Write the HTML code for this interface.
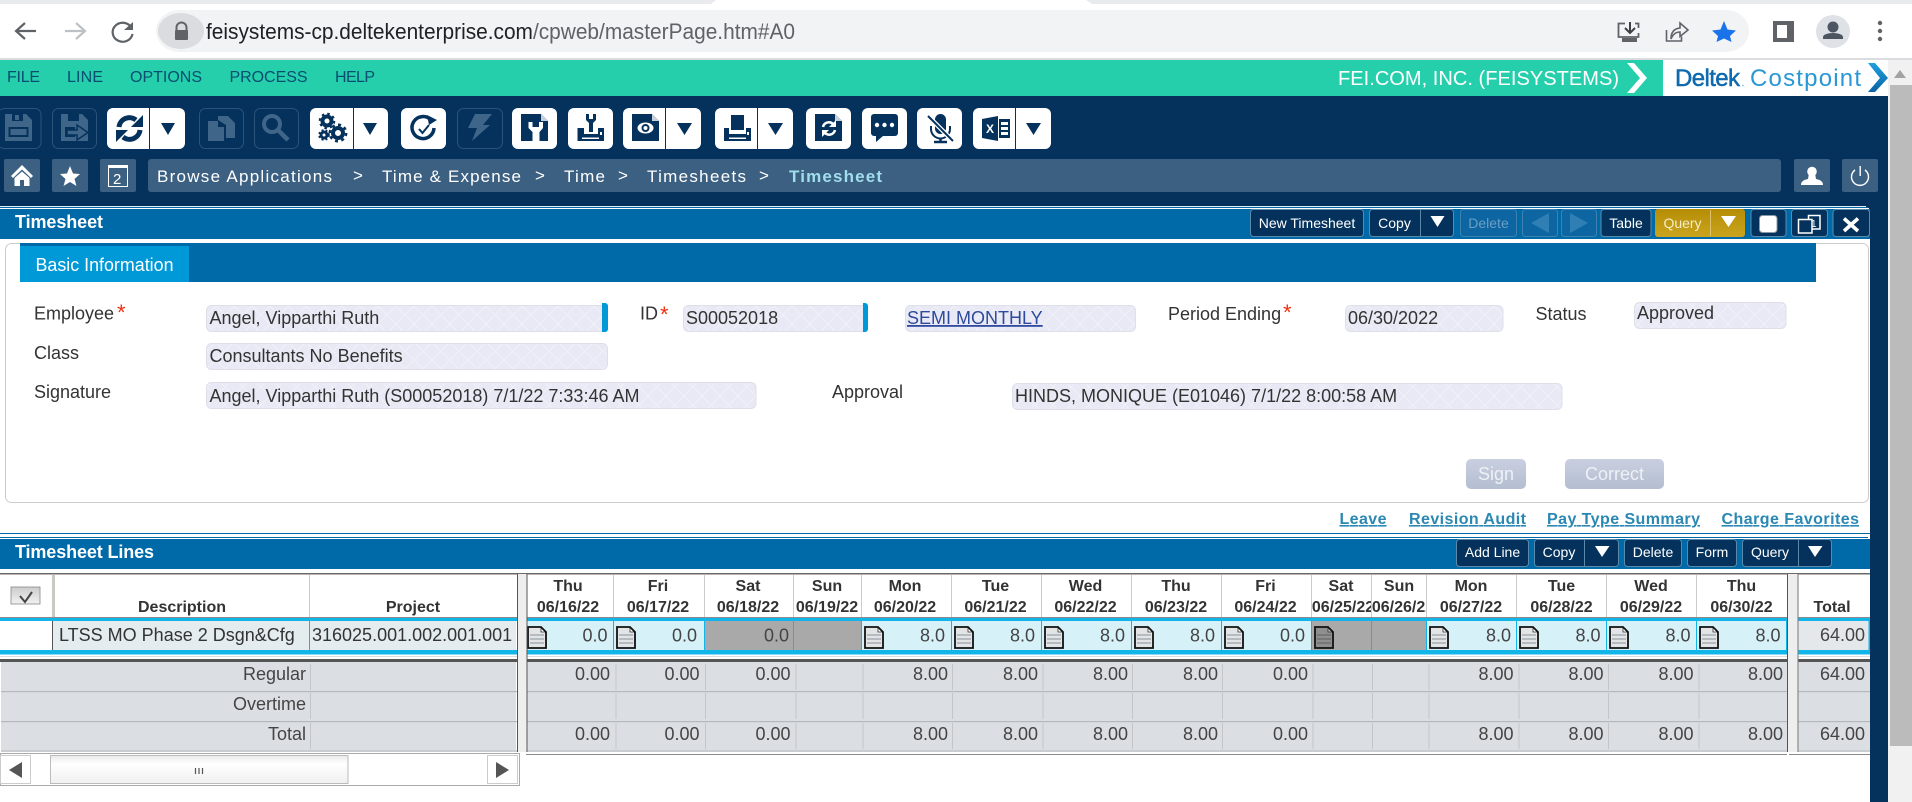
<!DOCTYPE html>
<html><head><meta charset="utf-8"><title>Timesheet</title>
<style>
html,body{margin:0;padding:0;width:1912px;height:802px;overflow:hidden;background:#fff}
svg{display:block;font-family:"Liberation Sans",Arial,sans-serif}
.l{font-size:18px;fill:#333}
.h{font-size:16px;font-weight:bold;fill:#333;text-anchor:middle}
.n{font-size:18px;fill:#444;text-anchor:end}
.b{font-size:14px;fill:#fff;text-anchor:middle}
.m{font-size:16px;fill:#0a4d70}
.c{font-size:17px;fill:#fff}
.k{font-size:16px;font-weight:bold;fill:#2a88b3;text-decoration:underline}
</style></head><body>
<svg width="1912" height="802" viewBox="0 0 1912 802" xmlns="http://www.w3.org/2000/svg">
<defs>
<pattern id="hatch" width="18" height="18" patternUnits="userSpaceOnUse"><rect width="18" height="18" fill="#e9e9f5"/><path d="M0 0L18 18M18 0L0 18" stroke="#f1f1f9" stroke-width="1"/></pattern>
<linearGradient id="gold" x1="0" y1="0" x2="0" y2="1"><stop offset="0" stop-color="#b58d05"/><stop offset="1" stop-color="#cba41f"/></linearGradient>
<linearGradient id="dis" x1="0" y1="0" x2="0" y2="1"><stop offset="0" stop-color="#c9cfe0"/><stop offset="1" stop-color="#b3bed0"/></linearGradient>
<linearGradient id="thumb" x1="0" y1="0" x2="0" y2="1"><stop offset="0" stop-color="#e9e9e9"/><stop offset=".3" stop-color="#fff"/><stop offset="1" stop-color="#f0f0f0"/></linearGradient>
<linearGradient id="chk" x1="0" y1="0" x2="0" y2="1"><stop offset="0" stop-color="#ccc"/><stop offset="1" stop-color="#f2f2f2"/></linearGradient>
<linearGradient id="chev" x1="0" y1="0" x2="0" y2="1"><stop offset="0" stop-color="#1ea0e0"/><stop offset="1" stop-color="#0b63a5"/></linearGradient>
<symbol id="doc" viewBox="0 0 20 23" width="20" height="23">
<path d="M1 1H14L19 6V22H1Z" fill="#e2e4e6"/>
<path d="M3 8H17V10H3ZM3 12H17V14H3ZM3 16H17V18H3Z" fill="#b5bcc1"/>
<path d="M14 1V6H19" fill="#fff" stroke="#333" stroke-width=".8"/>
<path d="M1 1H14L19 6V22H1Z" fill="none" stroke="#111" stroke-width="1.800"/>
</symbol>
<symbol id="docd" viewBox="0 0 20 23" width="20" height="23">
<path d="M1 1H14L19 6V22H1Z" fill="#8f8f8f"/>
<path d="M3 8H17V10H3ZM3 12H17V14H3ZM3 16H17V18H3Z" fill="#777"/>
<path d="M14 1V6H19" fill="#bbb" stroke="#333" stroke-width=".8"/>
<path d="M1 1H14L19 6V22H1Z" fill="none" stroke="#111" stroke-width="1.800"/>
</symbol>
<clipPath id="c25"><rect x="1312" y="595" width="59" height="22"/></clipPath>
<clipPath id="c26"><rect x="1372" y="595" width="54" height="22"/></clipPath>
</defs>

<!-- browser chrome -->
<rect width="1912" height="58" fill="#fff"/>
<path d="M0 0H716L711 4H0Z" fill="#e8eaed"/>
<path d="M1086 0H1912V4H1092Z" fill="#e8eaed"/>
<rect y="58" width="1912" height="2" fill="#dadce0"/>
<rect x="156" y="10" width="1593" height="42" rx="23" ry="21" fill="#f1f3f4"/>
<ellipse cx="181" cy="31" rx="23" ry="18" fill="#dadce0"/>
<path d="M176.500 31V27.500a5 5 0 0 1 10 0V31" fill="none" stroke="#5f6368" stroke-width="2"/>
<rect x="175" y="30" width="13" height="10" rx="1" fill="#5f6368"/>
<path d="M36 31H17M25 23L16 31L25 39" fill="none" stroke="#5f6368" stroke-width="2.200"/>
<path d="M65 31H84M76 23L85 31L76 39" fill="none" stroke="#bdc1c6" stroke-width="2.200"/>
<path d="M131 27A10 9.500 0 1 0 132.500 34" fill="none" stroke="#5f6368" stroke-width="2.200"/>
<path d="M133 22V30H124Z" fill="#5f6368"/>
<text x="206" y="39" font-size="22" fill="#5f6368" textLength="589" lengthAdjust="spacingAndGlyphs"><tspan fill="#202124">feisystems-cp.deltekenterprise.com</tspan>/cpweb/masterPage.htm#A0</text>
<!-- install icon -->
<path d="M1625 23.500H1618.500V37H1638.500V33" fill="none" stroke="#5f6368" stroke-width="1.800"/>
<path d="M1635 23.500H1638.500V28" fill="none" stroke="#5f6368" stroke-width="1.800"/>
<path d="M1630 22V32M1625 28L1630 33L1635 28" fill="none" stroke="#3c4043" stroke-width="2"/>
<rect x="1622" y="38" width="15" height="4" fill="#5f6368"/>
<!-- share icon -->
<path d="M1666.500 30V41H1681.500V36.500" fill="none" stroke="#5f6368" stroke-width="1.600"/>
<path d="M1671 39C1671 31 1675 28.500 1680 28V23L1688 30L1680 36.500V32C1676 32 1673 34 1671 39Z" fill="none" stroke="#5f6368" stroke-width="1.600"/>
<path d="M1724 21L1727.500 29.500L1736 30.500L1730 36L1731.500 42L1724 38.500L1716.500 42L1718 36L1712 30.500L1720.500 29.500Z" fill="#1a73e8"/>
<rect x="1773" y="21" width="21" height="21" fill="#5f6368"/><rect x="1777" y="25" width="10" height="13" fill="#fff"/>
<ellipse cx="1833" cy="31.500" rx="17" ry="16.500" fill="#dee1e6"/>
<circle cx="1833" cy="27" r="5.500" fill="#4c5663"/>
<path d="M1823 39V37C1823 34.500 1828 33 1833 33S1843 34.500 1843 37V39Z" fill="#4c5663"/>
<circle cx="1880" cy="23" r="2.200" fill="#5f6368"/><circle cx="1880" cy="31" r="2.200" fill="#5f6368"/><circle cx="1880" cy="39" r="2.200" fill="#5f6368"/>

<!-- app background -->
<rect y="96" width="1912" height="706" fill="#04325c"/>
<rect y="60" width="1888" height="36" fill="#26cfac"/>
<rect x="1663" y="60" width="226" height="36" fill="#fff"/>
<rect x="1888" y="60" width="24" height="742" fill="#f1f1f1"/>
<rect x="1890" y="85" width="22" height="661" fill="#bbb"/>
<path d="M1900 70L1906 78H1894Z" fill="#a3a3a3"/>

<!-- menu -->
<text class="m" x="7" y="82" textLength="33">FILE</text>
<text class="m" x="67" y="82" textLength="36">LINE</text>
<text class="m" x="130" y="82" textLength="72">OPTIONS</text>
<text class="m" x="229.500" y="82" textLength="78">PROCESS</text>
<text class="m" x="335" y="82" textLength="40">HELP</text>
<text x="1338" y="85" font-size="20" fill="#fff" textLength="281">FEI.COM, INC. (FEISYSTEMS)</text>
<path d="M1627 63H1634L1647 78L1634 93H1627L1640 78Z" fill="#fff"/>
<text x="1675" y="86" font-size="24" fill="#0f69ae" stroke="#0f69ae" stroke-width=".5" textLength="65">Deltek</text>
<circle cx="1743" cy="85.500" r=".8" fill="#6fb7e0"/>
<text x="1750" y="86" font-size="24" fill="#2a97d6" textLength="111">Costpoint</text>
<path d="M1868 63H1875L1888 78L1875 92H1868L1880 78Z" fill="url(#chev)"/>

<!-- toolbar disabled outlines -->
<g fill="none" stroke="#2b5278" stroke-width="1">
<rect x="-2" y="108.500" width="43" height="40" rx="6"/><rect x="52.500" y="108.500" width="44" height="40" rx="6"/>
<rect x="199.500" y="108.500" width="44" height="40" rx="6"/><rect x="254.500" y="108.500" width="44" height="40" rx="6"/>
<rect x="457.500" y="108.500" width="45" height="40" rx="6"/>
</g>
<!-- toolbar white buttons -->
<g fill="#fff">
<rect x="107" y="108" width="78" height="41" rx="6"/><rect x="310" y="108" width="78" height="41" rx="6"/>
<rect x="401" y="108" width="45" height="41" rx="6"/><rect x="512" y="108" width="45" height="41" rx="6"/>
<rect x="568" y="108" width="45" height="41" rx="6"/><rect x="623" y="108" width="78" height="41" rx="6"/>
<rect x="715" y="108" width="78" height="41" rx="6"/><rect x="806" y="108" width="45" height="41" rx="6"/>
<rect x="862" y="108" width="45" height="41" rx="6"/><rect x="917" y="108" width="45" height="41" rx="6"/>
<rect x="973" y="108" width="78" height="41" rx="6"/>
</g>
<g fill="#04325c">
<rect x="149" y="108" width="1" height="41"/><rect x="353" y="108" width="1" height="41"/>
<rect x="665" y="108" width="1" height="41"/><rect x="757" y="108" width="1" height="41"/>
<rect x="1015" y="108" width="1" height="41"/>
<path d="M161 123H175L168 135Z"/><path d="M363 123H377L370 135Z"/><path d="M677 123H692L684.500 135Z"/><path d="M768 123H783L775.500 135Z"/><path d="M1026 123H1041L1033.500 135Z"/>
</g>

<!-- disabled icons -->
<g fill="#3f6589">
<path d="M5 114H26L32 120V141H5Z"/><path d="M61 114H82L88 120V141H61Z"/>
<path d="M208 121H218V127H224V141H208Z"/><path d="M218 116H228L235 123V138H226V125L218 120Z"/>
<circle cx="272" cy="124" r="8" fill="none" stroke="#3f6589" stroke-width="4"/>
<path d="M278 130L288 140" stroke="#3f6589" stroke-width="4.500" fill="none"/>
<path d="M475 114H492L483 125H490L472 141L477 128H468Z"/>
</g>
<g fill="#04325c">
<rect x="12" y="114" width="11" height="7"/><rect x="8.500" y="127" width="20" height="10"/>
<rect x="68" y="114" width="11" height="7"/><rect x="65" y="127" width="10" height="10"/>
</g>
<rect x="10.500" y="129" width="16" height="6" fill="#3f6589"/>
<rect x="15" y="115" width="4" height="5" fill="#3f6589"/>
<path d="M67 130H77V125L88 132.500L77 140V135H67Z" fill="#3f6589" stroke="#04325c" stroke-width="1.500"/>

<!-- white button icons -->
<g fill="none" stroke="#04325c" stroke-width="5">
<path d="M119 127A10.500 10.500 0 0 1 136 120"/>
<path d="M140 130A10.500 10.500 0 0 1 123 137"/>
</g>
<g fill="#04325c">
<path d="M143 115V127H131Z"/><path d="M116 142V130H128Z"/>
</g>
<!-- gears -->
<g fill="none" stroke="#04325c">
<circle cx="327" cy="121" r="4.500" stroke-width="4"/><circle cx="327" cy="121" r="7" stroke-width="2.500" stroke-dasharray="2.500 3"/>
<circle cx="338" cy="133" r="5" stroke-width="4"/><circle cx="338" cy="133" r="8.200" stroke-width="2.500" stroke-dasharray="3 3.400"/>
<circle cx="324" cy="135" r="3" stroke-width="3"/><circle cx="324" cy="135" r="4.800" stroke-width="2" stroke-dasharray="2 2"/>
</g>
<!-- clock check -->
<path d="M431 120A11 11 0 1 0 434 128" fill="none" stroke="#04325c" stroke-width="3.500"/>
<path d="M427 115L437 120L429 125Z" fill="#04325c"/>
<path d="M419 129L422.500 133L429 125" fill="none" stroke="#04325c" stroke-width="2"/>
<!-- wrench doc -->
<path d="M521 114H541L548 121V141H521Z" fill="#04325c"/><path d="M541 114L548 121H541Z" fill="#c6d1dc"/>
<path d="M528.500 122H532.500V127H539V122H543V128L539.500 132V141H532.500V132L528.500 128Z" fill="#fff"/>
<!-- printer wrench -->
<path d="M586 114H589V119H593V114H596V120L593 123V132H589V123L586 120Z" fill="#04325c"/>
<path d="M577.500 128H584V134H598V128H604V141H577.500Z" fill="#04325c"/>
<rect x="582" y="137.500" width="17" height="1.500" fill="#fff"/><rect x="600" y="132" width="2" height="3" fill="#fff"/>
<!-- eye doc -->
<path d="M632 114H652L659 121V141H632Z" fill="#04325c"/><path d="M652 114L659 121H652Z" fill="#c6d1dc"/>
<ellipse cx="645.500" cy="128" rx="8" ry="5.500" fill="#fff"/><circle cx="645.500" cy="128" r="3" fill="none" stroke="#04325c" stroke-width="2"/>
<!-- printer -->
<rect x="731" y="115" width="13" height="15" fill="#04325c"/>
<path d="M724 128H729V134H746V128H751V141H724Z" fill="#04325c"/>
<rect x="729" y="137.500" width="17" height="1.500" fill="#fff"/><rect x="747" y="132" width="2" height="3" fill="#fff"/>
<!-- sync doc -->
<path d="M815 114H835L842 121V141H815Z" fill="#04325c"/><path d="M835 114L842 121H835Z" fill="#c6d1dc"/>
<g fill="none" stroke="#fff" stroke-width="2.500"><path d="M823 127A6 6 0 0 1 833 124"/><path d="M835 130A6 6 0 0 1 825 133"/></g>
<path d="M836 120V127H829Z" fill="#fff"/><path d="M822 137V130H829Z" fill="#fff"/>
<!-- chat -->
<path d="M874 114H895A3 3 0 0 1 898 117V133A3 3 0 0 1 895 136H883L876 142V136H874A3 3 0 0 1 871 133V117A3 3 0 0 1 874 114Z" fill="#04325c"/>
<circle cx="877" cy="125" r="2.200" fill="#fff"/><circle cx="884.500" cy="125" r="2.200" fill="#fff"/><circle cx="892" cy="125" r="2.200" fill="#fff"/>
<!-- mic -->
<rect x="935" y="114" width="11" height="20" rx="5.500" fill="#04325c"/>
<path d="M931 126V129A9.500 9.500 0 0 0 950 129V126" fill="none" stroke="#04325c" stroke-width="2"/>
<path d="M940.500 138V141M934 142H947" stroke="#04325c" stroke-width="2.500"/>
<path d="M928 116L953 141" stroke="#fff" stroke-width="4.500"/><path d="M928 116L953 141" stroke="#04325c" stroke-width="2"/>
<!-- excel -->
<path d="M982 119L998 116V141L982 138Z" fill="#04325c"/>
<rect x="999" y="119" width="11" height="19" fill="#04325c"/>
<path d="M1001 122H1008V125H1001ZM1001 127H1008V130H1001ZM1001 132H1008V135H1001Z" fill="#fff"/>
<text x="986" y="133" font-size="12" font-weight="bold" fill="#fff">X</text>

<!-- breadcrumb row -->
<g fill="#3c6082">
<rect x="4" y="159" width="36" height="33" rx="2"/><rect x="52" y="159" width="36" height="33" rx="2"/><rect x="100" y="159" width="36" height="33" rx="2"/>
<rect x="148" y="159" width="1633" height="33" rx="3"/><rect x="1794" y="159" width="36" height="33" rx="2"/><rect x="1842" y="159" width="36" height="33" rx="2"/>
</g>
<path d="M11 176L22 165L33 176L31 178L22 169.500L13 178Z" fill="#fff"/>
<path d="M14.500 178L22 171.500L29.500 178V186H24V180H20V186H14.500Z" fill="#fff"/>
<path d="M70 166L73 173.500L80 174L74.500 179L76.500 186L70 182L63.500 186L65.500 179L60 174L67 173.500Z" fill="#fff"/>
<rect x="108.500" y="165.500" width="19" height="21" fill="none" stroke="#fff" stroke-width="1"/><rect x="108" y="165" width="20" height="3" fill="#fff"/>
<text x="113" y="184" font-size="15" fill="#fff">2</text>
<text class="c" x="157" y="182" textLength="175">Browse Applications</text>
<text class="c" x="353" y="181">&gt;</text>
<text class="c" x="382" y="182" textLength="139">Time &amp; Expense</text>
<text class="c" x="535" y="181">&gt;</text>
<text class="c" x="564" y="182" textLength="41">Time</text>
<text class="c" x="618" y="181">&gt;</text>
<text class="c" x="647" y="182" textLength="99">Timesheets</text>
<text class="c" x="759" y="181">&gt;</text>
<text class="c" x="789" y="182" textLength="93" style="fill:#a0deec;font-weight:bold">Timesheet</text>
<circle cx="1812" cy="171.500" r="4.800" fill="#fff"/><path d="M1809 173H1815L1816 179C1820 180 1823 181 1823 185H1801C1801 181 1804 180 1808 179Z" fill="#fff"/>
<path d="M1855 170A8.500 8.500 0 1 0 1865 170" fill="none" stroke="#fff" stroke-width="1.400"/><rect x="1859.500" y="166" width="1.400" height="10" fill="#fff"/>

<!-- panel 1 -->
<rect y="206" width="1866" height="1" fill="#e8f0f6"/><rect y="207" width="1868" height="1" fill="#006aa9"/><rect y="208" width="1869" height="1" fill="#fff"/>
<rect y="209" width="1870" height="30" fill="#006aa9"/>
<rect y="239" width="1870" height="563" fill="#fff"/>
<text x="15" y="228" font-size="18" font-weight="bold" fill="#fff" textLength="88">Timesheet</text>

<!-- header buttons -->
<g fill="#04325c" stroke="#5b89a9" stroke-width="1">
<rect x="1250.500" y="209.500" width="113" height="27" rx="3"/>
<rect x="1369.500" y="209.500" width="84" height="27" rx="3"/>
<rect x="1601" y="209.500" width="50" height="27" rx="3"/>
<rect x="1751" y="209.500" width="35" height="27" rx="3"/><rect x="1791.500" y="209.500" width="36" height="27" rx="3"/><rect x="1833" y="209.500" width="36.500" height="27" rx="3"/>
</g>
<g fill="#0d65a2" stroke="#3d82ae" stroke-width="1">
<rect x="1460.500" y="209.500" width="56" height="27" rx="3"/>
<rect x="1522.500" y="209.500" width="35" height="27" rx="3"/>
<rect x="1561.500" y="209.500" width="35" height="27" rx="3"/>
</g>
<rect x="1655" y="209" width="90" height="28" rx="3" fill="url(#gold)"/>
<rect x="1420" y="210" width="1" height="26" fill="#5b89a9"/>
<rect x="1710" y="210" width="1" height="26" fill="#dcc06a"/>
<g fill="#fff"><path d="M1430.500 216H1444.500L1437.500 227Z"/><path d="M1721 216H1736L1728.500 227Z"/></g>
<path d="M1549 213V233L1531 223Z" fill="#2f7fb5"/><path d="M1570 213V233L1588 223Z" fill="#2f7fb5"/>
<text class="b" x="1307" y="228">New Timesheet</text>
<text class="b" x="1394.500" y="228">Copy</text>
<text class="b" x="1488.500" y="228" style="fill:#6b9fc4">Delete</text>
<text class="b" x="1626" y="228">Table</text>
<text class="b" x="1682.500" y="228" style="fill:#f5ecc8">Query</text>
<rect x="1759.500" y="215.500" width="17.500" height="17" rx="3" fill="#fff" stroke="#8a98a8" stroke-width="1"/>
<rect x="1808.500" y="215.500" width="11.500" height="13.500" fill="#04325c" stroke="#fff" stroke-width="1.500"/>
<text x="1811" y="227" font-size="10" fill="#fff">1</text>
<rect x="1798.500" y="219.500" width="13.500" height="13.500" fill="#04325c" stroke="#fff" stroke-width="1.500"/>
<path d="M1844 218.500L1858 231M1858 218.500L1844 231" stroke="#fff" stroke-width="3.600"/>

<!-- form -->
<rect x="5.500" y="243.500" width="1863" height="259" rx="6" fill="#fff" stroke="#ccc" stroke-width="1"/>
<rect x="20" y="243" width="1796" height="39" fill="#006aa9"/>
<rect x="20" y="246" width="169" height="36" fill="#0099d8"/>
<text x="35.500" y="271" font-size="18" fill="#fff" textLength="138" lengthAdjust="spacingAndGlyphs">Basic Information</text>

<g fill="url(#hatch)" stroke="#dfdfea" stroke-width="1">
<rect x="206.500" y="305.500" width="401" height="26" rx="5"/>
<rect x="683.500" y="305.500" width="184" height="26" rx="5"/>
<rect x="905.500" y="305.500" width="230" height="26" rx="5"/>
<rect x="1345.500" y="305.500" width="157.500" height="26" rx="5"/>
<rect x="1634.500" y="302.500" width="151.500" height="26" rx="5"/>
<rect x="206.500" y="343.500" width="401" height="26" rx="5"/>
<rect x="206.500" y="382.500" width="549.500" height="26" rx="5"/>
<rect x="1012.500" y="383.500" width="549.500" height="26" rx="5"/>
</g>
<path d="M602 303H605A3 3 0 0 1 608 306V329A3 3 0 0 1 605 332H602Z" fill="#0099d8"/>
<path d="M863 303H865A3 3 0 0 1 868 306V329A3 3 0 0 1 865 332H863Z" fill="#0099d8"/>

<text class="l" x="34" y="319.500">Employee</text>
<text x="117" y="320" font-size="22" fill="#f2300f">*</text>
<text class="l" x="640" y="319.500">ID</text>
<text x="660" y="322" font-size="22" fill="#f2300f">*</text>
<text class="l" x="1168" y="320">Period Ending</text>
<text x="1283" y="320" font-size="22" fill="#f2300f">*</text>
<text class="l" x="1535.500" y="320">Status</text>
<text class="l" x="34" y="359">Class</text>
<text class="l" x="34" y="398">Signature</text>
<text class="l" x="832" y="398">Approval</text>
<text class="l" x="209.500" y="324">Angel, Vipparthi Ruth</text>
<text class="l" x="686" y="324">S00052018</text>
<text x="907" y="324" font-size="18" fill="#2e4a9e" text-decoration="underline">SEMI MONTHLY</text>
<text class="l" x="1348" y="324">06/30/2022</text>
<text class="l" x="1637" y="319">Approved</text>
<text class="l" x="209.500" y="362">Consultants No Benefits</text>
<text class="l" x="209.500" y="402">Angel, Vipparthi Ruth (S00052018) 7/1/22 7:33:46 AM</text>
<text class="l" x="1015" y="402">HINDS, MONIQUE (E01046) 7/1/22 8:00:58 AM</text>

<rect x="1466" y="459" width="60" height="30" rx="5" fill="url(#dis)"/>
<rect x="1565" y="459" width="99" height="30" rx="5" fill="url(#dis)"/>
<text x="1496" y="480" font-size="18" fill="#eef1f6" text-anchor="middle">Sign</text>
<text x="1614.500" y="480" font-size="18" fill="#eef1f6" text-anchor="middle">Correct</text>

<text class="k" x="1339.500" y="524" textLength="47">Leave</text>
<text class="k" x="1409" y="524" textLength="117">Revision Audit</text>
<text class="k" x="1547" y="524" textLength="153">Pay Type Summary</text>
<text class="k" x="1721.500" y="524" textLength="137.500">Charge Favorites</text>

<!-- panel 2 -->
<rect y="533" width="1870" height="1" fill="#006aa9"/>
<rect y="537" width="1868" height="1" fill="#006aa9"/>
<rect y="539" width="1870" height="30" fill="#006aa9"/>
<text x="15" y="558" font-size="18" font-weight="bold" fill="#fff" textLength="139">Timesheet Lines</text>
<g fill="#04325c" stroke="#5b89a9" stroke-width="1">
<rect x="1456.500" y="539.500" width="72" height="27" rx="3"/>
<rect x="1534.500" y="539.500" width="84" height="27" rx="3"/>
<rect x="1624.500" y="539.500" width="57" height="27" rx="3"/>
<rect x="1687.500" y="539.500" width="49" height="27" rx="3"/>
<rect x="1742.500" y="539.500" width="89" height="27" rx="3"/>
</g>
<g fill="#5b89a9"><rect x="1584" y="540" width="1" height="26"/><rect x="1798" y="540" width="1" height="26"/></g>
<g fill="#fff"><path d="M1595 546H1609.500L1602 557Z"/><path d="M1808 546H1822.500L1815 557Z"/></g>
<text class="b" x="1492.500" y="557">Add Line</text>
<text class="b" x="1559" y="557">Copy</text>
<text class="b" x="1653" y="557">Delete</text>
<text class="b" x="1712" y="557">Form</text>
<text class="b" x="1770" y="557">Query</text>

<!-- grid -->
<rect y="573" width="1870" height="1.500" fill="#6a6a6a"/>
<!-- header -->
<rect x="11" y="587" width="29" height="17" fill="url(#chk)" stroke="#888" stroke-width=".8"/>
<path d="M20 596L25 602L32 592" fill="none" stroke="#444" stroke-width="2"/>
<rect x="52" y="575" width="3" height="42" fill="#c9c9c1"/>
<g fill="#ccc">
<rect x="309" y="575" width="1" height="42"/><rect x="613" y="575" width="1" height="42"/><rect x="704" y="575" width="1" height="42"/><rect x="793" y="575" width="1" height="42"/><rect x="861" y="575" width="1" height="42"/><rect x="951" y="575" width="1" height="42"/><rect x="1041" y="575" width="1" height="42"/><rect x="1131" y="575" width="1" height="42"/><rect x="1221" y="575" width="1" height="42"/><rect x="1311" y="575" width="1" height="42"/><rect x="1371" y="575" width="1" height="42"/><rect x="1426" y="575" width="1" height="42"/><rect x="1516" y="575" width="1" height="42"/><rect x="1606" y="575" width="1" height="42"/><rect x="1696" y="575" width="1" height="42"/>
</g>
<text class="h" x="182" y="612">Description</text>
<text class="h" x="413" y="612">Project</text>
<text class="h" x="568" y="591">Thu</text><text class="h" x="568" y="612">06/16/22</text>
<text class="h" x="658" y="591">Fri</text><text class="h" x="658" y="612">06/17/22</text>
<text class="h" x="748" y="591">Sat</text><text class="h" x="748" y="612">06/18/22</text>
<text class="h" x="827" y="591">Sun</text><text class="h" x="827" y="612">06/19/22</text>
<text class="h" x="905" y="591">Mon</text><text class="h" x="905" y="612">06/20/22</text>
<text class="h" x="995.500" y="591">Tue</text><text class="h" x="995.500" y="612">06/21/22</text>
<text class="h" x="1085.500" y="591">Wed</text><text class="h" x="1085.500" y="612">06/22/22</text>
<text class="h" x="1176" y="591">Thu</text><text class="h" x="1176" y="612">06/23/22</text>
<text class="h" x="1265.500" y="591">Fri</text><text class="h" x="1265.500" y="612">06/24/22</text>
<text class="h" x="1341" y="591">Sat</text><text class="h" x="1343" y="612" clip-path="url(#c25)">06/25/22</text>
<text class="h" x="1399" y="591">Sun</text><text class="h" x="1403" y="612" clip-path="url(#c26)">06/26/22</text>
<text class="h" x="1471" y="591">Mon</text><text class="h" x="1471" y="612">06/27/22</text>
<text class="h" x="1561.500" y="591">Tue</text><text class="h" x="1561.500" y="612">06/28/22</text>
<text class="h" x="1651" y="591">Wed</text><text class="h" x="1651" y="612">06/29/22</text>
<text class="h" x="1741.500" y="591">Thu</text><text class="h" x="1741.500" y="612">06/30/22</text>
<text class="h" x="1832" y="612">Total</text>

<!-- selected row -->
<rect y="617" width="1870" height="1" fill="#8b8b8b"/>
<rect y="618" width="1870" height="3" fill="#12b5e8"/>
<rect y="650" width="1870" height="4.500" fill="#12b5e8"/>
<rect y="621" width="52" height="29" fill="#fff"/>
<rect x="52" y="621" width="1" height="29" fill="#555"/>
<rect x="53" y="621" width="463" height="29" fill="#e4ecf0"/>
<rect x="526" y="621" width="1261" height="29" fill="#d7f1f8"/>
<rect x="704" y="621" width="157.500" height="29" fill="#a9a9a9"/>
<rect x="1311" y="621" width="115.500" height="29" fill="#a9a9a9"/>
<rect x="1798" y="621" width="72" height="29" fill="#e4e8eb"/>
<g fill="#12b5e8">
<rect x="309" y="621" width="1" height="29"/><rect x="613" y="621" width="1" height="29"/><rect x="704" y="621" width="1" height="29"/><rect x="793" y="621" width="1" height="29"/><rect x="861" y="621" width="1" height="29"/><rect x="951" y="621" width="1" height="29"/><rect x="1041" y="621" width="1" height="29"/><rect x="1131" y="621" width="1" height="29"/><rect x="1221" y="621" width="1" height="29"/><rect x="1311" y="621" width="1" height="29"/><rect x="1371" y="621" width="1" height="29"/><rect x="1426" y="621" width="1" height="29"/><rect x="1516" y="621" width="1" height="29"/><rect x="1606" y="621" width="1" height="29"/><rect x="1696" y="621" width="1" height="29"/><rect x="1786" y="621" width="1.500" height="29"/><rect x="1868.500" y="621" width="1.500" height="29"/>
</g>
<use href="#doc" x="527" y="626"/><use href="#doc" x="616" y="626"/><use href="#doc" x="864" y="626"/><use href="#doc" x="954" y="626"/><use href="#doc" x="1044" y="626"/><use href="#doc" x="1134" y="626"/><use href="#doc" x="1224" y="626"/><use href="#docd" x="1314" y="626"/><use href="#doc" x="1429" y="626"/><use href="#doc" x="1519" y="626"/><use href="#doc" x="1609" y="626"/><use href="#doc" x="1699" y="626"/>
<text class="l" x="59" y="641">LTSS MO Phase 2 Dsgn&amp;Cfg</text>
<text class="l" x="312" y="641">316025.001.002.001.001</text>
<g>
<text class="n" x="607.500" y="641.500">0.0</text><text class="n" x="697" y="641.500">0.0</text><text class="n" x="789" y="641.500">0.0</text><text class="n" x="945" y="641.500">8.0</text><text class="n" x="1035" y="641.500">8.0</text><text class="n" x="1125" y="641.500">8.0</text><text class="n" x="1215" y="641.500">8.0</text><text class="n" x="1305" y="641.500">0.0</text><text class="n" x="1511" y="641.500">8.0</text><text class="n" x="1600.500" y="641.500">8.0</text><text class="n" x="1690.500" y="641.500">8.0</text><text class="n" x="1780.500" y="641.500">8.0</text><text class="n" x="1865" y="641">64.00</text>
</g>

<!-- totals -->
<rect y="656" width="1870" height="1" fill="#ddd"/>
<rect y="659" width="1870" height="3" fill="#555"/>
<rect x="1" y="662" width="515" height="89" fill="#dbdfe3"/>
<rect x="526" y="662" width="1261" height="89" fill="#dbdfe3"/>
<rect x="1798" y="662" width="72" height="89" fill="#dbdfe3"/>
<rect x="1" y="691" width="1869" height="1.200" fill="#b5b9bd"/><rect x="1" y="721" width="1869" height="1.200" fill="#b5b9bd"/><rect x="1" y="750.500" width="1869" height="1.200" fill="#b5b9bd"/>
<g fill="#c3c6c9">
<path d="M310 664h1v26h-1zM310 693h1v26h-1zM310 723h1v26h-1z"/>
<path d="M615.500 664h1v26h-1zM615.500 693h1v26h-1zM615.500 723h1v26h-1z"/>
<path d="M705 664h1v26h-1zM705 693h1v26h-1zM705 723h1v26h-1z"/>
<path d="M795.500 664h1v26h-1zM795.500 693h1v26h-1zM795.500 723h1v26h-1z"/>
<path d="M862.500 664h1v26h-1zM862.500 693h1v26h-1zM862.500 723h1v26h-1z"/>
<path d="M952 664h1v26h-1zM952 693h1v26h-1zM952 723h1v26h-1z"/>
<path d="M1042.500 664h1v26h-1zM1042.500 693h1v26h-1zM1042.500 723h1v26h-1z"/>
<path d="M1132 664h1v26h-1zM1132 693h1v26h-1zM1132 723h1v26h-1z"/>
<path d="M1222 664h1v26h-1zM1222 693h1v26h-1zM1222 723h1v26h-1z"/>
<path d="M1312.500 664h1v26h-1zM1312.500 693h1v26h-1zM1312.500 723h1v26h-1z"/>
<path d="M1372 664h1v26h-1zM1372 693h1v26h-1zM1372 723h1v26h-1z"/>
<path d="M1428.500 664h1v26h-1zM1428.500 693h1v26h-1zM1428.500 723h1v26h-1z"/>
<path d="M1518.500 664h1v26h-1zM1518.500 693h1v26h-1zM1518.500 723h1v26h-1z"/>
<path d="M1608 664h1v26h-1zM1608 693h1v26h-1zM1608 723h1v26h-1z"/>
<path d="M1698.500 664h1v26h-1zM1698.500 693h1v26h-1zM1698.500 723h1v26h-1z"/>
</g>
<text class="n" x="306" y="680">Regular</text><text class="n" x="306" y="710">Overtime</text><text class="n" x="306" y="740">Total</text>
<text class="n" x="610" y="680">0.00</text><text class="n" x="699.500" y="680">0.00</text><text class="n" x="790.500" y="680">0.00</text><text class="n" x="948" y="680">8.00</text><text class="n" x="1038" y="680">8.00</text><text class="n" x="1128" y="680">8.00</text><text class="n" x="1218" y="680">8.00</text><text class="n" x="1308" y="680">0.00</text><text class="n" x="1513.500" y="680">8.00</text><text class="n" x="1603.500" y="680">8.00</text><text class="n" x="1693.500" y="680">8.00</text><text class="n" x="1783" y="680">8.00</text><text class="n" x="1865" y="680">64.00</text>
<text class="n" x="610" y="740">0.00</text><text class="n" x="699.500" y="740">0.00</text><text class="n" x="790.500" y="740">0.00</text><text class="n" x="948" y="740">8.00</text><text class="n" x="1038" y="740">8.00</text><text class="n" x="1128" y="740">8.00</text><text class="n" x="1218" y="740">8.00</text><text class="n" x="1308" y="740">0.00</text><text class="n" x="1513.500" y="740">8.00</text><text class="n" x="1603.500" y="740">8.00</text><text class="n" x="1693.500" y="740">8.00</text><text class="n" x="1783" y="740">8.00</text><text class="n" x="1865" y="740">64.00</text>

<!-- splitters -->
<rect x="517" y="574" width="10" height="178" fill="#eeeeee"/><rect x="517" y="574" width="1" height="178" fill="#555"/><rect x="526.500" y="574" width="1" height="178" fill="#555"/>
<rect x="1787" y="574" width="11" height="178" fill="#eeeeee"/><rect x="1787" y="574" width="1" height="178" fill="#555"/><rect x="1797.500" y="574" width="1" height="178" fill="#777"/>
<rect x="526" y="754" width="1261" height="1" fill="#8b8b8b"/><rect x="1789" y="754" width="81" height="1" fill="#8b8b8b"/>

<!-- horizontal scrollbar -->
<rect x=".5" y="753.500" width="519" height="32" fill="#fff" stroke="#aaa" stroke-width="1"/>
<rect x=".5" y="755.500" width="30" height="28" fill="#fff" stroke="#ccc"/>
<rect x="487.500" y="755.500" width="30" height="28" fill="#fff" stroke="#ccc"/>
<rect x="50.500" y="755.500" width="297.500" height="28" fill="url(#thumb)" stroke="#bbb"/>
<path d="M22 762V778L9 770Z" fill="#555"/><path d="M496 762V778L509 770Z" fill="#555"/>
<path d="M195.500 768v6M199 768v6M202.500 768v6" stroke="#555" stroke-width="1.200"/>
</svg>
</body></html>
